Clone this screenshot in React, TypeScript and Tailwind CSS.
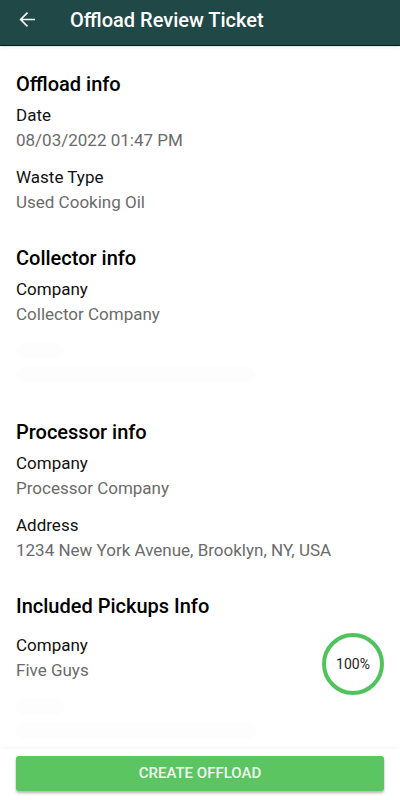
const sections = [
  {
    title: 'Offload info',
    fields: [
      { label: 'Date', value: '08/03/2022 01:47 PM' },
      { label: 'Waste Type', value: 'Used Cooking Oil' },
    ],
  },
  {
    title: 'Collector info',
    fields: [
      { label: 'Company', value: 'Collector Company' },
      { label: '', value: '' },
    ],
  },
  {
    title: 'Processor info',
    fields: [
      { label: 'Company', value: 'Processor Company' },
      { label: 'Address', value: '1234 New York Avenue, Brooklyn, NY, USA' },
    ],
  },
];

function Field({ label, value }: { label: string; value: string }) {
  if (!label) {
    return (
      <div className="h-[50px] py-1">
        <div className="h-4 w-12 rounded-full bg-[#fdfdfd]" />
        <div className="mt-2 h-4 w-60 rounded-full bg-[#fdfdfd]" />
      </div>
    );
  }

  return (
    <dl className="text-[17px] leading-[25px]">
      <dt className="text-[#111111]">{label}</dt>
      <dd className="text-[#6b6b6b]">{value}</dd>
    </dl>
  );
}

function Progress({ percent }: { percent: number }) {
  const length = 2 * Math.PI * 29;

  return (
    <div className="relative flex size-[62px] shrink-0 items-center justify-center">
      <svg className="absolute inset-0 -rotate-90" viewBox="0 0 62 62" fill="none" aria-hidden="true">
        <circle
          cx="31"
          cy="31"
          r="29"
          stroke="#50c45c"
          strokeWidth="4"
          strokeDasharray={`${(length * percent) / 100} ${length}`}
        />
      </svg>
      <span className="text-sm text-[#222222]">{percent}%</span>
    </div>
  );
}

export default function App() {
  return (
    <div className="flex min-h-screen flex-col bg-white font-['Roboto',sans-serif] text-black">
      <header className="flex h-[46px] items-center border-b border-[#071b1a] bg-[#1f4847] pb-[6px] pl-[18px] text-white shadow-sm">
        <button type="button" aria-label="Back" className="size-[18px]">
          <svg viewBox="0 0 18 18" fill="none" stroke="currentColor" strokeWidth="1.6" aria-hidden="true">
            <path d="M17 8.5H2.8M9.5 1.6L2.6 8.5l6.9 6.9" />
          </svg>
        </button>
        <h1 className="ml-[34px] text-xl font-medium">Offload Review Ticket</h1>
      </header>

      <main className="flex flex-col gap-7 px-4 pt-6">
        {sections.map((section) => (
          <section key={section.title}>
            <h2 className="mb-[5px] text-xl leading-7 font-medium">{section.title}</h2>
            <div className="flex flex-col gap-3 pb-px">
              {section.fields.map((field, i) => (
                <Field key={i} label={field.label} value={field.value} />
              ))}
            </div>
          </section>
        ))}

        <section>
          <h2 className="mb-[13px] text-xl leading-7 font-medium">Included Pickups Info</h2>
          <div className="flex items-start justify-between">
            <Field label="Company" value="Five Guys" />
            <Progress percent={100} />
          </div>
          <Field label="" value="" />
        </section>
      </main>

      <footer className="sticky bottom-0 mt-auto bg-white px-4 pt-[7px] pb-[9px] shadow-[0_-1px_4px_rgba(0,0,0,0.06)]">
        <button
          type="button"
          className="h-[35px] w-full rounded-[3px] bg-[#5bc561] text-[15px] font-medium text-[#effaef] uppercase shadow-[0_2px_3px_rgba(0,0,0,0.3)]"
        >
          Create Offload
        </button>
      </footer>
    </div>
  );
}
